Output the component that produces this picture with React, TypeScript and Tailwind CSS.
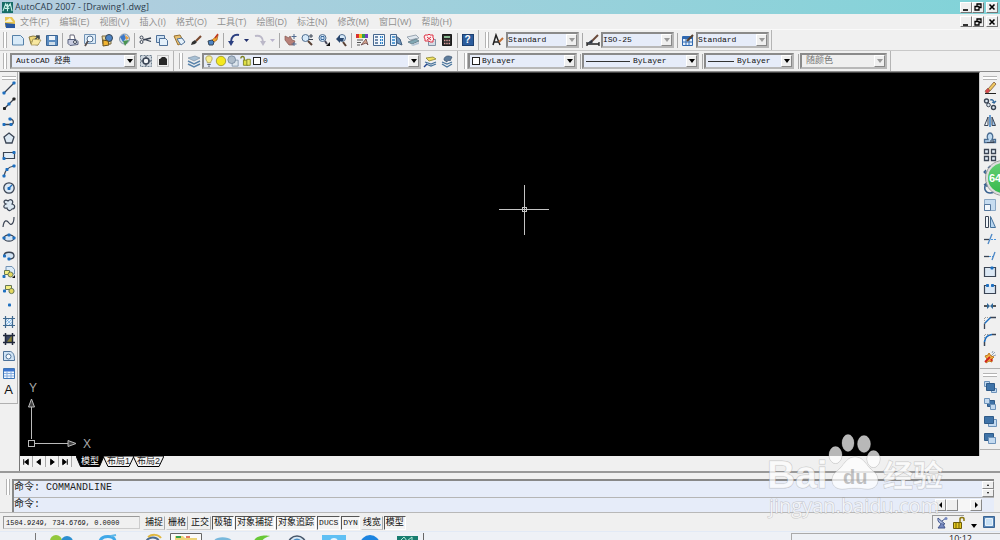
import type { ReactNode } from "react";
import clsx from "clsx";

const K = "#3a4454";
const B = "#1d6fc0";
const L = "#c4daf0";

const Icon = ({ children, className = "w-3.5 h-3.5" }: { children: ReactNode; className?: string }) => (
  <svg viewBox="0 0 14 14" className={clsx("shrink-0", className)} fill="none" stroke={K} strokeWidth="1">
    {children}
  </svg>
);

const Dot = ({ x, y, c = B }: { x: number; y: number; c?: string }) => (
  <rect x={x - 1.500} y={y - 1.500} width="3" height="3" rx=".8" fill={c} stroke="none" />
);

const fileIcons: [string, ReactNode][] = [
  ["New", <path d="M1.500 2.500h8l3 3v6.500h-11z" fill="#d8eaf8" stroke="#5580a8" />],
  ["Open", <><path d="M1 4l4-1 6 1-1 8-7-1z" fill="#f0d878" stroke="#8a7a40" /><path d="M4 9l7-6M8 3h3v3" stroke="#40484c" strokeWidth="1.500" /><path d="M5 6l8 1-3 5H3z" fill="#f8e8a0" stroke="#8a7a40" strokeWidth=".6" /></>],
  ["Save", <><path d="M1.500 2.500h11v10h-11z" fill="#5b8cc0" stroke="#3a6494" /><path d="M4 3h6v4H4z" fill="#eef4fa" stroke="none" /><path d="M4 9h6v3H4z" fill="#cfdde9" stroke="none" /></>],
];
const printIcons: [string, ReactNode][] = [
  ["Plot", <><path d="M4 6V2h4l1 4" fill="#fff" stroke="#667" /><path d="M2 6.500h8l2 2v3l-8 1-2-2z" fill="#c8cce0" stroke="#56607c" /><circle cx="9" cy="9" r="1.500" fill="#fff" /></>],
  ["Plot Preview", <><path d="M1.500 1.500h11v9h-11z" fill="#dcebf8" stroke="#7393b4" /><circle cx="7" cy="6" r="3" fill="#f4faff" stroke="#506e90" /><path d="M5 8l-3 5" stroke="#585050" strokeWidth="1.800" /></>],
  ["Publish", <><path d="M2 3h9v8H3z" fill="#e8d9a0" stroke="#7a6840" /><circle cx="9" cy="5" r="3.500" fill="#4e84c4" stroke="#345" /><path d="M3 7l5 1 1 4-6 1z" fill="#f2b430" stroke="#655020" /></>],
  ["3D DWF", <><circle cx="7.500" cy="6" r="5" fill="#c9d8e8" stroke="#8496a8" /><path d="M3 4l4-3 2 4-3 4z" fill="#3c78c8" stroke="none" /><path d="M8 2l4 3-3 2z" fill="#e8a040" stroke="none" /><path d="M6 8l6-1-4 6z" fill="#4a9450" stroke="none" /></>],
];
const editIcons: [string, ReactNode][] = [
  ["Cut", <><path d="M5 7l8-2M5 6l8 2.500" strokeWidth="1.300" /><circle cx="3.500" cy="4.500" r="1.500" /><circle cx="3.500" cy="9" r="1.500" /></>],
  ["Copy", <><path d="M1.500 2.500h8v7h-8z" fill="#cfe2f4" stroke="#4f7199" /><path d="M4.500 5.500h6l2 2v5h-8z" fill="#e4f0fa" stroke="#4f7199" /></>],
  ["Paste", <><path d="M2 3l6-1 4 7-6 3z" fill="#e8c070" stroke="#987030" /><path d="M5 6l5-1 3 4-4 3z" fill="#e4f0fa" stroke="#4f7199" /></>],
  ["Match Properties", <><path d="M7 8l5-5" stroke="#7a4a30" strokeWidth="2.200" /><path d="M2 12l1-3 3-2 2 2-2 2z" fill="#303030" stroke="none" /></>],
  ["Block Editor", <><path d="M6 7l6-5-1 5-3 2z" fill="#f0a830" stroke="#a05818" strokeWidth=".7" /><path d="M2 8l4-1 2 2-1 3-4 0z" fill="#4e84c4" stroke="#345" /><path d="M9 5l3-4" stroke="#c03820" strokeWidth="1.500" /></>],
];
const zoomIcons: [string, ReactNode][] = [
  ["Pan", <><path d="M2 3l4 2 1-2 2 4 3 1-2 4-4 0-4-5z" fill="#b88078" stroke="#845850" strokeWidth=".7" /><path d="M11 1v5M8.500 3.500h5M11 9v4M8.500 11h5" stroke="#506a90" /></>],
  ["Zoom Realtime", <><circle cx="5.500" cy="5" r="3.500" fill="#d6e9f9" stroke="#506e90" /><path d="M8 8l4 4" stroke="#584034" strokeWidth="2" /><path d="M11 1v4M9 3h4M9 6.500h4" /></>],
  ["Zoom Window", <><circle cx="5.500" cy="5" r="3.500" fill="#d6e9f9" stroke="#506e90" /><path d="M4 3.500h3v3H4z" stroke="#3f6da0" /><path d="M8 8l2 3" stroke="#445" strokeWidth="2" /><path d="M13 9v4H9z" fill="#111" stroke="none" /></>],
  ["Zoom Previous", <><circle cx="8" cy="5" r="3.500" fill="#d6e9f9" stroke="#506e90" /><path d="M2 6l4-4v3h4l-1 3H6v2z" fill="#28456c" stroke="none" /><path d="M9 9l3 4" stroke="#584034" strokeWidth="2" /></>],
];
const paletteIcons: [string, ReactNode][] = [
  ["Properties", <><path d="M1 1h3v4H1z" fill="#d93030" stroke="none" /><path d="M4 1h3v4H4z" fill="#f0c020" stroke="none" /><path d="M7 1h3v4H7z" fill="#30a048" stroke="none" /><path d="M10 1h3v4h-3z" fill="#7040c0" stroke="none" /><path d="M2 7h6M2 9.500h4M2 12h3" stroke="#555" /><path d="M6 12l5-6 2 6-2-2z" fill="#dba890" stroke="#644" strokeWidth=".8" /></>],
  ["DesignCenter", <><path d="M1.500 1.500h11v11h-11z" fill="#f2f7fc" stroke="#47688f" /><path d="M3 4h3M3 7h3M3 10h3" stroke="#47688f" strokeWidth="1.500" /><path d="M8 4h3M8 7h3M8 10h3" stroke="#2e83c8" strokeWidth="2" strokeDasharray="1.200 .7" /></>],
  ["Tool Palettes", <><path d="M1.500 1.500h6v11h-6z" fill="#eaf3fb" stroke="#47688f" /><path d="M3 4h3M3 7h3M3 10h3" stroke="#2e83c8" strokeWidth="1.500" /><path d="M7 3l4 3 2 6-5-2z" fill="#7195bb" stroke="#405f80" /></>],
  ["Sheet Set", <><path d="M1 4l9-2 3 3-9 2z" fill="#dfe7ee" stroke="#9aa6b2" /><path d="M2 9l8-3 3 2-7 3z" fill="#80a8b4" stroke="#6d8793" /><path d="M5 12l8-3v2l-6 2z" fill="#b0c4d4" stroke="none" /></>],
  ["Markup", <><path d="M5.500 6.500h7v6h-7z" fill="#d4dbe4" stroke="#8192a4" /><path d="M2 2h3l1-1 1 1h3v3l1 1-1 1v2H7L6 8H2V6L1 4z" fill="#fcecee" stroke="#dd3344" /><path d="M4 4l4 3M8 4L4 7" stroke="#dd3344" /></>],
  ["Calculator", <><path d="M2.500 1.500h9v11h-9z" fill="#282828" stroke="#181818" /><path d="M4 3h6v2H4z" fill="#88b890" stroke="none" /><path d="M4 7.500h6M4 10.500h6" stroke="#e0a0a0" strokeWidth="1.500" strokeDasharray="1.400 .9" /></>],
];

const drawIcons: [string, ReactNode][] = [
  ["Line", <><path d="M2 12L12 2" strokeWidth="1.300" /><Dot x={2} y={12} /><Dot x={12} y={2} /></>],
  ["Construction Line", <><path d="M2 12L12 2" strokeWidth="1.300" /><Dot x={2.500} y={11.500} c="#222" /><Dot x={12} y={2} c="#222" /><Dot x={7} y={7} /></>],
  ["Polyline", <><path d="M2 10.500h8a3 3 0 0 0 0-5H8" strokeWidth="1.300" /><Dot x={2} y={10.500} /><Dot x={9} y={10.500} /><Dot x={8} y={5} /></>],
  ["Polygon", <path d="M7 2l5 4-2 6H4L2 6z" fill="#dce8f2" strokeWidth="1.300" />],
  ["Rectangle", <><path d="M1.500 4.500h11v6h-11z" fill="#e2edf7" strokeWidth="1.200" /><Dot x={2} y={10.500} /><Dot x={12} y={4.500} /></>],
  ["Arc", <><path d="M2 12C3 6 6 3 12 2" strokeWidth="1.200" /><Dot x={2} y={12} /><Dot x={5} y={5.500} /><Dot x={12} y={2} /></>],
  ["Circle", <><circle cx="7" cy="7" r="5.200" fill="#dce9f5" strokeWidth="1.300" /><path d="M7 7l3-3" stroke={B} strokeWidth="1.300" /><Dot x={7} y={7.500} /></>],
  ["Revision Cloud", <path d="M4 6C0 4 3 1 6 3c3-3 6 0 4 3 4 1 3 5 0 5-2 3-5 1-5-1C1 11 1 7 4 6z" fill="#dce8f2" strokeWidth="1.200" />],
  ["Spline", <path d="M1 12C2 4 5 5 7 8s5 1 5-6" strokeWidth="1.200" />],
  ["Ellipse", <><ellipse cx="7" cy="7" rx="5" ry="3.200" fill="#d4e4f3" strokeWidth="1.300" /><Dot x={2} y={7} /><Dot x={12} y={7} /><Dot x={7} y={4} /></>],
  ["Ellipse Arc", <><path d="M2 8c0-5 10-5 10 0 0 2-2 3-5 3" fill="#d4e4f3" strokeWidth="1.300" /><Dot x={2.500} y={8} /><Dot x={7} y={11} /></>],
  ["Insert Block", <><path d="M4 1.500h6l2.500 3V9H4z" fill="#dcebf8" stroke="#7393b4" /><path d="M2.500 5.500h5v4h-5z" fill="#f4ee80" stroke="#675" /><circle cx="8.500" cy="9.500" r="2.500" fill="#e4d860" stroke="#675" /><path d="M13 10v3h-3z" fill="#111" stroke="none" /><Dot x={2} y={11.500} /></>],
  ["Make Block", <><path d="M3.500 3.500h6v4h-6z" fill="#f4ee80" stroke="#675" /><circle cx="9.500" cy="9" r="2.600" fill="#e4d860" stroke="#675" /><Dot x={2.500} y={9} /></>],
  ["Point", <Dot x={7.500} y={7} />],
  ["Hatch", <><path d="M3.500 3.500h7v7h-7z" fill="#e6f1fb" stroke="none" /><path d="M1 3.500h12M1 10.500h12M3.500 1v12M10.500 1v12" stroke="#40698f" strokeWidth="1.200" /><path d="M4 7l3-3M4 10l6-6M7 10l3-3M4 4l6 6" stroke="#5fa0d8" strokeWidth=".6" /></>],
  ["Gradient", <><path d="M3.500 3.500h7v7h-7z" fill="#3b4560" stroke="none" /><path d="M5 10l5-7v7z" fill="#8d8434" stroke="none" /><path d="M1 3.500h12M1 10.500h12M3.500 1v12M10.500 1v12" stroke="#20283c" strokeWidth="1.500" /></>],
  ["Region", <><path d="M1.500 2.500h7c3 1 4 4 4 9h-11z" fill="#d0e3f4" stroke="#4d7299" /><circle cx="6.500" cy="7.500" r="2.500" fill="#f6fafd" stroke="#4d7299" /></>],
  ["Table", <><path d="M1.500 2.500h11v10h-11z" fill="#f2f8ff" stroke="#3e76b8" /><path d="M2 3h10v2.500H2z" fill="#3e76d0" stroke="none" /><path d="M2 7.500h10M2 10h10M5 5v7M9 5v7" stroke="#88aee0" /></>],
];

const modifyIcons: [string, ReactNode][] = [
  ["Erase", <><path d="M5 8l6-7 2 2-6 7z" fill="#f0c860" stroke="#7e5a38" strokeWidth=".8" /><path d="M2 10l3-3 2 3-2 2H3z" fill="#d84850" stroke="#864" strokeWidth=".6" /><path d="M2 12.500h11" stroke="#222" /></>],
  ["Copy Object", <><circle cx="3.500" cy="4" r="2" fill="#dce8f2" strokeWidth="1.400" /><circle cx="10.500" cy="10.500" r="2" fill="#dce8f2" strokeWidth="1.400" /><circle cx="5.500" cy="8" r="1.800" fill="#dce8f2" /><path d="M7 3c3-1 4 1 4 3l-2-1M11 6l2-2" stroke="#32689c" strokeWidth="1.300" /></>],
  ["Mirror", <><path d="M5 3v8.500H1.500z" fill="#f4f8fc" /><path d="M9 3v8.500h3.500z" fill="#9cc4ec" /><path d="M7 1v12" stroke={B} strokeWidth="1.300" /></>],
  ["Offset", <><path d="M1.500 11.500h11V8.500H9C11 5 9 2 7 2S3 5 5 8.500H1.500z" fill="#bedaf2" stroke="#4b6d92" strokeWidth="1.300" /><path d="M4 11.500h7V10H7" /></>],
  ["Array", <path d="M1.500 1.500h4v4h-4zM8.500 1.500h4v4h-4zM1.500 8.500h4v4h-4zM8.500 8.500h4v4h-4z" fill="#e2edf7" strokeWidth="1.300" />],
  ["Move", <path d="M7 1v12M1 7h12M5 3l2-2 2 2M5 11l2 2 2-2M3 5L1 7l2 2M11 5l2 2-2 2" stroke="#38618f" strokeWidth="1.200" />],
  ["Rotate", <path d="M3 3c-3 5 0 9 4 9 3 0 5-2 5-5M1 4l3-2v4" stroke="#38618f" strokeWidth="1.500" />],
  ["Scale", <><path d="M1.500 1.500h11v11h-11z" fill="#c6dcf0" stroke="#8aa7c4" /><path d="M1.500 6.500h6v6h-6z" fill="#f2f7fc" stroke="#55779c" /></>],
  ["Stretch", <><path d="M2.500 1.500h3v11h-3z" fill="#f2f6fa" /><path d="M7.500 1.500l5 11h-5z" fill="#b8d6f0" stroke="#44719c" /></>],
  ["Trim", <><path d="M1 7.500h5" strokeWidth="1.300" /><path d="M5 12L9 2" stroke="#4b86c4" strokeWidth="1.300" /><path d="M8 7.500h6" stroke="#4b95dd" strokeDasharray="2 1" /></>],
  ["Extend", <><path d="M1 7.500h5" strokeWidth="1.300" /><path d="M6 7.500h4" stroke="#4b95dd" strokeDasharray="2 1" /><path d="M9 11l3-8" stroke="#4b86c4" strokeWidth="1.300" /></>],
  ["Break at Point", <><path d="M1.500 2.500h11v9h-11z" fill="#dce8f4" strokeWidth="1.200" /><Dot x={9} y={3} /></>],
  ["Break", <><path d="M4 3.500H1.500v8h11v-8H10" fill="#dce8f4" strokeWidth="1.200" /><Dot x={4.500} y={3.500} /><Dot x={9.500} y={3.500} /></>],
  ["Join", <><path d="M1 7h4M9 7h4" stroke="#222" strokeWidth="1.500" /><path d="M4 4L7 7 4 10zM10 4L7 7l3 3z" fill="#306898" stroke="none" /></>],
  ["Chamfer", <><path d="M1.500 13V7.500M7 1.500h6" strokeWidth="1.300" /><path d="M1.500 7.500l6-6" stroke={B} strokeWidth="1.500" /><path d="M1.500 7V1.500H7" stroke="#999" strokeDasharray="1 1" /></>],
  ["Fillet", <><path d="M1.500 13V9M9 1.500h4" strokeWidth="1.500" /><path d="M1.500 9C2 4 4 2 9 1.500" stroke={B} strokeWidth="1.600" /><path d="M1.500 7V1.500H7" stroke="#999" strokeDasharray="1 1" /></>],
  ["Explode", <><path d="M8 6l4-4M10 6l3-1M9 3l1-2" stroke="#93a3b4" /><path d="M2 6l3-1 1-2 2 3 3 1-2 2v3l-3-1-3 2 1-4z" fill="#f0b040" stroke="#c07820" /><path d="M2 12l5-5M8 9l1 2" stroke="#d02020" strokeWidth="1.800" /></>],
];

const orderIcons: [string, ReactNode][] = [
  ["Bring to Front", <><path d="M1.500 1.500h5v5h-5zM8.500 8.500h5v4h-5z" fill={L} stroke="#6d93ba" /><path d="M3.500 3.500h8v7h-8z" fill="#3f73a8" stroke="#2f5a88" /></>],
  ["Send to Back", <><path d="M4.500 3.500h7v6h-7z" fill="#3f73a8" stroke="#2f5a88" /><path d="M1.500 1.500h5v5h-5zM7.500 7.500h5v5h-5z" fill={L} stroke="#6d93ba" /></>],
  ["Bring Above", <><path d="M5.500 5.500h8v7h-8z" fill={L} stroke="#6d93ba" /><path d="M1.500 2.500h9v7h-9z" fill="#3f73a8" stroke="#2f5a88" /></>],
  ["Send Under", <><path d="M1.500 2.500h9v7h-9z" fill="#3f73a8" stroke="#2f5a88" /><path d="M5.500 6.500h7v6h-7z" fill={L} stroke="#6d93ba" /></>],
];

const Tool = ({ name, children }: { name: string; children: ReactNode }) => (
  <button aria-label={name} className="w-[17px] h-[15px] shrink-0 flex items-center justify-center">
    <Icon>{children}</Icon>
  </button>
);

const Tools = ({ items }: { items: [string, ReactNode][] }) => (
  <>
    {items.map(([name, art]) => (
      <Tool key={name} name={name}>{art}</Tool>
    ))}
  </>
);

const Sep = () => (
  <div className="w-1 h-[15px] shrink-0 flex justify-center">
    <div className="w-px bg-[#a9a9a9]" />
  </div>
);

const Grip = () => (
  <div className="w-1 h-4 shrink-0 border-x border-[#b4b4b4] bg-white" />
);

const Caret = ({ dim }: { dim?: boolean }) => (
  <button aria-label="More" className="w-[9px] h-4 shrink-0 flex items-center justify-center">
    <svg viewBox="0 0 5 3" className="w-[5px] h-[3px]">
      <path d="M0 0h5L2.500 3z" fill={dim ? "#b9b3cc" : "#22306c"} />
    </svg>
  </button>
);

type ComboProps = { label: string; value: string; width: string; pad?: string; dim?: boolean; gray?: boolean; children?: ReactNode };

const Combo = ({ label, value, width, pad = "pl-1", dim, gray, children }: ComboProps) => (
  <div className={clsx("relative h-4 shrink-0", width)}>
    <select
      aria-label={label}
      className={clsx(
        "appearance-none block w-full h-4 leading-3 font-['Liberation_Mono','Noto_Sans_CJK_SC',monospace] border-2 border-t-[#8a8a8a] border-l-[#8a8a8a] border-r-[#b8b8b8] border-b-[#b8b8b8]",
        pad,
        gray ? "bg-[#efefef] text-[#777] text-[9px]" : "bg-[#e6ecf9] text-[#111] text-[8px]",
      )}
    >
      <option>{value}</option>
    </select>
    <div className="absolute inset-y-0 left-px flex items-center pointer-events-none">{children}</div>
    <div className="absolute top-0.5 bottom-0.5 right-0.5 w-[11px] bg-[#efefef] border border-t-white border-l-white border-r-[#888] border-b-[#888] flex items-center justify-center pointer-events-none">
      <svg viewBox="0 0 6 4" className="w-1.5 h-1">
        <path d="M0 0h6L3 4z" fill={dim || gray ? "#999" : "#000"} />
      </svg>
    </div>
  </div>
);

const Band = ({ children, className }: { children: ReactNode; className?: string }) => (
  <div className={clsx("h-full flex items-center shrink-0 border-r border-[#b4b4b4]", className)}>{children}</div>
);

const WindowButtons = () => (
  <div className="flex">
    {["Minimize", "Restore", "Close"].map((name, i) => (
      <button
        key={name}
        aria-label={name}
        className={clsx("w-3 h-[11px] bg-[#efefef] border border-t-white border-l-white border-r-[#777] border-b-[#777] flex items-center justify-center", i === 2 && "ml-0.5")}
      >
        <svg viewBox="0 0 8 8" className="w-2 h-2" fill="none" stroke="#000" strokeWidth="1.300">
          {i === 0 && <path d="M1 7h5" strokeWidth="1.600" />}
          {i === 1 && <path d="M3 3V1h4v3.500H5.500M1 3.500h4v3.500H1z" />}
          {i === 2 && <path d="M1.500 1.500l5 5M6.500 1.500l-5 5" strokeWidth="1.600" />}
        </svg>
      </button>
    ))}
  </div>
);

const menus = ["文件(F)", "编辑(E)", "视图(V)", "插入(I)", "格式(O)", "工具(T)", "绘图(D)", "标注(N)", "修改(M)", "窗口(W)", "帮助(H)"];

const Header = () => (
  <>
    <div className="h-3.5 shrink-0 flex items-center justify-between pl-0.5 pr-0.5 bg-linear-to-r from-[#b5cddf] to-[#80d3d8]">
      <div className="flex items-center gap-0.5">
        <svg viewBox="0 0 12 12" className="w-[11px] h-[11px]">
          <rect width="12" height="12" fill="#176c66" />
          <path d="M1 10l3-8 2 4 3-4 2 8M3 7h5M6 2v8" fill="none" stroke="#c8f0e8" strokeWidth="1.200" />
        </svg>
        <h1 className="text-[9px] leading-3 text-[#2c3c4c] font-['Open_Sans',sans-serif]">AutoCAD 2007 - [Drawing1.dwg]</h1>
      </div>
      <WindowButtons />
    </div>
    <div className="h-[15px] shrink-0 flex items-center justify-between pl-1 pr-0.5">
      <nav className="flex items-center">
        <svg viewBox="0 0 12 12" className="w-3 h-3 mr-1">
          <path d="M1 1h7l3 4v6H1z" fill="#e8c552" />
          <path d="M0 6l6-4 3 4H4z" fill="#f6f0d0" />
          <path d="M1 7l10 1v4H2z" fill="#2a58a0" />
        </svg>
        <div className="flex gap-2.5">
          {menus.map((m) => (
            <button key={m} className="text-[9px] leading-3 text-[#929292] whitespace-nowrap">{m}</button>
          ))}
        </div>
      </nav>
      <WindowButtons />
    </div>
  </>
);

const Toolbars = () => (
  <>
    <div className="h-[22px] shrink-0 flex items-center border-y border-t-[#fafafa] border-b-[#c8c8c8]">
      <Band className="pl-[3px] pr-0.5">
        <Grip />
        <div className="w-0.5" />
        <Tools items={fileIcons} />
        <Sep />
        <Tools items={printIcons} />
        <Sep />
        <Tools items={editIcons} />
        <Sep />
        <Tool name="Undo"><path d="M12 2C7 1 4 4 4 9" stroke="#2b3f80" strokeWidth="2" /><path d="M1 8h6l-3 5z" fill="#2b3f80" stroke="none" /></Tool>
        <Caret />
        <Tool name="Redo"><path d="M2 3c5-1 8 1 8 6" stroke="#bbb8c8" strokeWidth="2" /><path d="M7 8h6l-3 5z" fill="#bbb8c8" stroke="none" /></Tool>
        <Caret dim />
        <Sep />
        <Tools items={zoomIcons} />
        <Sep />
        <Tools items={paletteIcons} />
        <Sep />
        <button aria-label="Help" className="w-[17px] h-[15px] flex items-center justify-center">
          <span className="w-3 h-3 bg-[#2b5c9c] border border-[#1c3f70] text-white text-[10px] leading-[10px] font-bold">?</span>
        </button>
      </Band>
      <Band className="pl-1.5 pr-0.5">
        <Grip />
        <Tool name="Text Style"><path d="M2 12L5 2l4 10M3 9h5" stroke="#222" strokeWidth="1.500" /><path d="M8 9l4-4" stroke="#c07038" strokeWidth="2" /></Tool>
        <Combo label="Text style" value="Standard" width="w-[73px]" pad="pl-0" dim />
        <div className="w-px" />
        <Sep />
        <Tool name="Dimension Style"><path d="M1 11h12M1 9v4M13 9v4" stroke="#222" strokeWidth="1.300" /><path d="M5 9l7-7" stroke="#6a4a3a" strokeWidth="2" /><path d="M2 10l4-3v3z" fill="#222" /></Tool>
        <Combo label="Dimension style" value="ISO-25" width="w-[73px]" pad="pl-0" dim />
        <div className="w-px" />
        <Sep />
        <Tool name="Table Style"><path d="M1.500 3.500h10v9h-10z" fill="#e4effb" stroke="#2f68b0" /><path d="M2 4h9v2H2z" fill="#2f68b0" stroke="none" /><path d="M2 9h9M5 6v6M8 6v6" stroke="#2f68b0" /><path d="M6 8l6-6" stroke="#554030" strokeWidth="2" /></Tool>
        <Combo label="Table style" value="Standard" width="w-[73px]" pad="pl-0" dim />
      </Band>
    </div>
    <div className="h-[21px] shrink-0 flex items-center border-b border-[#8c8c8c]">
      <Band className="pl-[3px] pr-0.5">
        <Grip />
        <div className="w-[3px]" />
        <Combo label="Workspace" value="AutoCAD 经典" width="w-[127px]" />
        <Tool name="Workspace Settings"><path d="M1.500 1.500h11v11h-11z" fill="#d0d8e0" stroke="#70808f" strokeDasharray="2 1" /><circle cx="7" cy="7" r="3" fill="#f4f6f8" strokeWidth="1.500" /><path d="M7 2v3M7 9v3M2 7h3M9 7h3" /></Tool>
        <Tool name="My Workspace"><path d="M1.500 1.500h11v11h-11z" stroke="#999" strokeDasharray="1 1" /><path d="M3 5h1l2-2h3l2 2v6H3z" fill="#282828" stroke="none" /></Tool>
      </Band>
      <Band className="pl-[5px] pr-0.5">
        <Grip />
        <div className="w-0.5" />
        <Tool name="Layer Properties"><path d="M1 4l7-2 5 2-6 3z" fill="#a8c0d4" stroke="#7f94a8" strokeWidth=".7" /><path d="M1 7l6 3 6-3M1 10l6 3 6-3" stroke="#5c85ac" strokeWidth="1.500" /></Tool>
        <Combo label="Layer" value="0" width="w-[219px]" pad="pl-[59px]">
          <Icon className="w-3 h-3"><path d="M7 1c5 0 4 5 2 7v1H5V8C3 6 2 1 7 1z" fill="#f8ee90" stroke="#a89c50" /><path d="M5 11h4M6 13h2" /></Icon>
          <Icon className="w-3 h-3"><circle cx="7" cy="7" r="5.500" fill="#f4e820" stroke="#9c942c" /></Icon>
          <Icon className="w-3 h-3"><path d="M6 6h7v7H6z" fill="#dde6ee" stroke="#8094a8" /><circle cx="5.500" cy="5.500" r="4.500" fill="#aebcca" stroke="#75889c" /></Icon>
          <Icon className="w-3.5 h-3"><path d="M1 4c0-3 4-3 4 0v4" stroke="#7c8020" strokeWidth="1.500" /><path d="M4 6h5v6H4z" fill="#dfe044" stroke="#7c8020" /><path d="M8 5h4v7H8z" fill="#e8e86c" stroke="#7c8020" /></Icon>
          <span className="w-2 h-2 bg-white border border-[#222]" />
        </Combo>
        <Tool name="Make Current"><path d="M3 4l7-1 3 2-7 2z" fill="#f0e060" stroke="#8a8430" strokeWidth=".8" /><path d="M2 8l6 2 5-2M3 10l5 2 5-2" stroke="#48749c" strokeWidth="1.300" /><path d="M1 13l3-3" stroke="#24448c" strokeWidth="1.500" /></Tool>
        <Tool name="Layer Previous"><path d="M2 8l5 2 5-2M2 10l5 3 5-3" stroke="#48749c" strokeWidth="1.300" /><path d="M4 6c0-4 4-5 8-3L10 7c0-1-3-1-3 1z" fill="#5f7d9c" stroke="#354e6c" strokeWidth=".7" /></Tool>
      </Band>
      <Band className="pl-1.5 pr-[3px]">
        <Grip />
        <Combo label="Color" value="ByLayer" width="w-[109px]" pad="pl-3"><span className="w-2 h-2 ml-[3px] bg-white border border-[#222]" /></Combo>
        <div className="w-px" />
        <Sep />
        <Combo label="Linetype" value="ByLayer" width="w-[117px]" pad="pl-[49px]"><span className="w-11 h-px ml-[3px] bg-[#333]" /></Combo>
        <div className="w-px" />
        <Sep />
        <Combo label="Lineweight" value="ByLayer" width="w-[90px]" pad="pl-[31px]"><span className="w-[26px] h-px ml-[3px] bg-[#333]" /></Combo>
        <div className="w-0.5" />
        <Sep />
        <Combo label="Plot style" value="随颜色" width="w-[87px]" gray />
      </Band>
    </div>
  </>
);

const HGrip = () => <div className="h-1 w-3.5 shrink-0 border-y border-[#b4b4b4] bg-white" />;

const LayoutTab = ({ name, active }: { name: string; active?: boolean }) => (
  <button className={clsx("relative -mr-px h-[11px] text-[9px] leading-[11px]", active ? "w-7 text-white" : "w-[31px] text-[#222]")}>
    <svg viewBox="0 0 31 11" preserveAspectRatio="none" className="absolute inset-0 w-full h-full">
      <path d="M0 0h31l-5 10.500H5z" fill={active ? "#000" : "#f4f4f4"} stroke="#000" />
    </svg>
    <span className="relative">{name}</span>
  </button>
);

const Workspace = () => (
  <div className="relative flex-1 min-h-0 flex overflow-hidden">
    <aside className="w-[18px] shrink-0 self-start pt-1 pb-1.5 flex flex-col items-center border-r border-b border-[#b0b0b0]">
      <HGrip />
      <div className="h-[317px] flex flex-col justify-between">
        <Tools items={drawIcons} />
        <button aria-label="Text" className="w-[17px] h-[15px] text-[13px] leading-[15px] font-['Liberation_Sans',sans-serif] text-[#111]">A</button>
      </div>
    </aside>
    <main className="flex-1 min-w-0 ml-px flex flex-col border-l border-[#777]">
      <div className="relative flex-1 min-h-0 bg-black border-t border-[#444] border-r border-r-[#ccc]">
        <svg viewBox="0 0 50 50" className="absolute left-[calc(50%-1px)] top-28 w-[50px] h-[50px]" stroke="#c4c4c4" fill="none">
          <path d="M0 24.500h50M25.500 0v50" />
          <rect x="23.500" y="22.500" width="4" height="4" />
        </svg>
        <svg viewBox="0 0 80 76" className="absolute left-1 bottom-0 w-20 h-[76px] font-['Liberation_Sans',sans-serif]" stroke="#bbb" fill="none">
          <path d="M7.500 59V26M11 63.500h33" />
          <rect x="4.500" y="60.500" width="6" height="6" />
          <path d="M7.500 19l3 8h-6zM52 63.500l-8-3v6z" fill="#444" />
          <text x="5" y="12" fontSize="12" fill="#aaa" stroke="none">Y</text>
          <text x="59" y="68" fontSize="12" fill="#aaa" stroke="none">X</text>
        </svg>
      </div>
      <div className="h-[15px] shrink-0 flex items-start">
        {["M9 2v6L5 5zM4 2v6", "M8 2v6L4 5z", "M5 2v6l4-3z", "M4 2v6l4-3zM9 2v6"].map((d, i) => (
          <button key={d} aria-label={["First", "Previous", "Next", "Last"][i]} className="w-[13px] h-[11px] border-r border-[#aaa] bg-[#f4f4f4]">
            <svg viewBox="0 0 13 10" className="w-3 h-2.5"><path d={d} fill="#000" stroke="#000" /></svg>
          </button>
        ))}
        <div className="flex pl-1">
          <LayoutTab name="模型" active />
          <LayoutTab name="布局1" />
          <LayoutTab name="布局2" />
        </div>
      </div>
    </main>
    <aside className="w-5 shrink-0 flex flex-col">
      <div className="pt-1 pb-1 flex flex-col items-center border-b border-[#b0b0b0]">
        <HGrip />
        <div className="h-[284px] flex flex-col justify-between">
          <Tools items={modifyIcons} />
        </div>
      </div>
      <div className="pt-1 pb-1 flex flex-col items-center border-b border-[#b0b0b0]">
        <HGrip />
        <div className="pt-0.5 h-[68px] flex flex-col justify-between">
          <Tools items={orderIcons} />
        </div>
      </div>
    </aside>
    <div className="absolute -right-5 top-[89px] w-[34px] h-[34px] rounded-full border-2 border-[#ddd] outline outline-[#999] bg-linear-to-b from-[#62cf72] to-[#35b94d] pl-px text-[11px] leading-[30px] font-bold text-white font-['Liberation_Sans',sans-serif]">64</div>
  </div>
);

const ScrollButton = ({ name, d, className }: { name: string; d: string; className: string }) => (
  <button aria-label={name} className={clsx("bg-[#efefef] border border-t-white border-l-white border-r-[#888] border-b-[#888] flex items-center justify-center", className)}>
    <svg viewBox="0 0 6 6" className="w-1.5 h-1.5"><path d={d} fill="#000" /></svg>
  </button>
);

const CommandPanel = () => (
  <div className="h-[41px] shrink-0 border-t-2 border-[#999] pt-1.5 pl-1.5 pr-1.5 flex">
    <Grip />
    <div className="flex-1 ml-0.5 border-t-2 border-l-2 border-[#888] bg-[#e6ecf9] text-[10px] text-[#222] font-['Liberation_Mono','Noto_Sans_CJK_SC',monospace]">
      <div className="h-[17px] flex justify-between border-b border-[#b5b5b5]">
        <p className="leading-[14px]">命令: COMMANDLINE</p>
        <div className="w-3 flex flex-col">
          <ScrollButton name="Scroll up" d="M2 4l1-2 1 2z" className="h-2" />
          <ScrollButton name="Scroll down" d="M2 2l1 2 1-2z" className="h-2" />
        </div>
      </div>
      <div className="h-3.5 flex items-center">
        <label htmlFor="command" className="leading-[14px]">命令:</label>
        <input id="command" className="flex-1 min-w-0 ml-1 h-3 outline-none bg-transparent" />
        <div className="w-[47px] h-3 mr-3 flex bg-[#f6f6f6]">
          <ScrollButton name="Scroll left" d="M4 0v6L1 3z" className="w-[11px]" />
          <div className="w-3 bg-[#efefef] border border-r-[#888] border-b-[#888] border-t-white border-l-white" />
          <ScrollButton name="Scroll right" d="M2 0v6l3-3z" className="w-3 ml-auto" />
        </div>
      </div>
    </div>
  </div>
);

const modes: [string, boolean][] = [
  ["捕捉", false], ["栅格", false], ["正交", false], ["极轴", true], ["对象捕捉", true],
  ["对象追踪", true], ["DUCS", true], ["DYN", true], ["线宽", false], ["模型", true],
];

const StatusBar = () => (
  <div className="h-[19px] shrink-0 flex items-center border-t border-[#b8b8b8] pl-[3px] pr-[3px] font-['Liberation_Mono','Noto_Sans_CJK_SC',monospace] text-[#111]">
    <div className="w-[137px] h-[13px] pl-0.5 border border-t-[#999] border-l-[#999] border-[#ccc] text-[7px] leading-3 whitespace-pre">1504.9249, 734.6769, 0.0000</div>
    <div className="flex gap-px pl-[3px] pt-0.5">
      {modes.map(([name, on]) => (
        <button
          key={name}
          aria-pressed={on}
          className={clsx(
            "h-3.5 px-px border leading-3 whitespace-nowrap",
            name.startsWith("D") ? "text-[8px]" : "text-[9px]",
            on ? "border-t-[#555] border-l-[#555] border-r-white border-b-white bg-[#f4f4f4]" : "border-t-transparent border-l-transparent border-r-[#aaa] border-b-[#ccc]",
          )}
        >
          {name}
        </button>
      ))}
    </div>
    <div className="ml-auto flex items-center">
      <div className="w-8 h-3.5 flex items-center border-t border-l border-[#999]">
        <Tool name="Communication Center"><path d="M3 2c-1 4 3 7 7 6z" fill="#a8b8dc" stroke="#44568c" /><path d="M6 8l-3 4h7l-2-4M7 5l4-3" fill="#7488c0" stroke="#44568c" /><circle cx="11" cy="2.500" r="1.500" fill="#7488c0" stroke="none" /></Tool>
        <Tool name="Lock"><path d="M8 6V3c0-2 4-2 4 0v2" stroke="#8c7810" strokeWidth="1.500" /><path d="M1.500 6.500h8v6h-8z" fill="#e4c820" stroke="#6c5c08" /><path d="M4 7v5M7 7v5" stroke="#6c5c08" /></Tool>
      </div>
      <button aria-label="Tray menu" className="w-3 h-3 ml-1 flex items-end justify-center">
        <svg viewBox="0 0 6 4" className="w-1.5 h-1"><path d="M0 0h6L3 4z" /></svg>
      </button>
      <Tool name="Clean Screen"><path d="M1.500 1.500h11v11h-11z" fill="#5a88b8" stroke="#3a6494" /><path d="M3.500 3.500h7v7h-7z" fill="#c8e0f4" stroke="#e8f2fa" /></Tool>
    </div>
  </div>
);

const Taskbar = () => (
  <footer className="h-[9px] shrink-0 overflow-hidden flex items-start border-t border-[#e2eaf6] bg-[#eef1f6] pt-px">
    <div className="w-9 h-5 shrink-0 border-r border-[#777]" />
    <svg viewBox="0 0 390 8" className="w-[390px] h-2 shrink-0">
      <circle cx="20" cy="8" r="6" fill="#93c83d" /><circle cx="31" cy="9" r="6" fill="#2c8fd0" />
      <path d="M64 8c2-6 14-6 15 0" fill="none" stroke="#40a8e8" strokeWidth="3" /><path d="M75 3l5-1" stroke="#60b8e8" strokeWidth="2" />
      <path d="M110 9c2-6 12-6 13 0" fill="none" stroke="#4c6c90" strokeWidth="2" /><path d="M112 4c4-3 10-3 13 1" fill="none" stroke="#e0b840" strokeWidth="2" />
      <path d="M134.500 8V.5h31V8" fill="#fafafa" stroke="#666" />
      <path d="M139 3h8l2 2h12v4h-22z" fill="#ecd478" /><path d="M140 4h5" stroke="#38a050" strokeWidth="2" /><path d="M150 4h4" stroke="#d85030" strokeWidth="1.500" />
      <path d="M178 8c1-5 16-5 18 0z" fill="#78b8dc" />
      <path d="M218 8c2-6 12-6 16-5-4 1-7 3-8 5" fill="#68c838" />
      <circle cx="261" cy="12" r="9" fill="#d8e8f4" stroke="#48586c" strokeWidth="1.500" /><circle cx="261" cy="11" r="5.500" fill="#4a90c8" />
      <rect x="286" y="2" width="24" height="8" fill="#60c0f4" /><circle cx="298" cy="9" r="4" fill="#e8f6fe" />
      <circle cx="334" cy="12" r="10" fill="#1c84e0" />
      <rect x="361" y="3" width="21" height="6" fill="#187c70" /><path d="M364 8l4-4 3 4 5-4v4" fill="none" stroke="#b0e8d8" />
      <path d="M387.500 0v8" stroke="#666" />
    </svg>
    <div className="ml-auto w-[209px] shrink-0 border-t border-l border-[#aaa] h-5 pl-[157px] text-[9px] leading-[10px] text-[#222] font-['Open_Sans',sans-serif]">10:12</div>
  </footer>
);

const Watermark = () => (
  <svg viewBox="0 0 190 90" className="absolute right-[46px] bottom-4 w-[190px] h-[90px] pointer-events-none" fill="#fff" fillOpacity=".72" stroke="#888" strokeOpacity=".4" strokeWidth="1" paintOrder="stroke">
    <ellipse cx="71.500" cy="21" rx="6.500" ry="8.500" />
    <ellipse cx="84" cy="9" rx="6" ry="8.500" />
    <ellipse cx="100" cy="10" rx="6.500" ry="8.500" />
    <ellipse cx="109.500" cy="25" rx="6.500" ry="8.500" />
    <path d="M91 23c9 0 11 9 18 14 8 6 6 18-5 18-5 0-8-1-13-1s-8 1-13 1c-11 0-13-12-5-18 7-5 9-14 18-14z" />
    <text x="3" y="54" fontSize="39" fontWeight="700" fontFamily="Liberation Sans, sans-serif">Bai</text>
    <text x="79" y="50" fontSize="20" fontWeight="700" fontFamily="Liberation Sans, sans-serif" fill="#999" fillOpacity=".6" stroke="none">du</text>
    <text x="119" y="52" fontSize="30" fontWeight="700" fontFamily="Noto Sans CJK SC, sans-serif">经验</text>
    <text x="5" y="79" fontSize="20" fontFamily="Open Sans, sans-serif">jingyan.baidu.com</text>
  </svg>
);

export default function App() {
  return (
    <div className="relative h-screen flex flex-col overflow-hidden bg-[#f0f0f0] font-['Liberation_Sans','Noto_Sans_CJK_SC',sans-serif]">
      <Header />
      <Toolbars />
      <Workspace />
      <CommandPanel />
      <StatusBar />
      <Taskbar />
      <Watermark />
    </div>
  );
}
